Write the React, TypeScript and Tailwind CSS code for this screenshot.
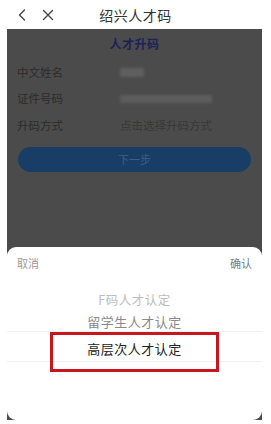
import React from "react";

export default function App() {
  const font = { fontFamily: '"Noto Sans CJK SC", "Noto Sans", sans-serif' };
  return (
    <div className="w-[271px] h-[424px] bg-white overflow-hidden" style={font}>
      {/* header */}
      <div className="h-[29px] grid grid-cols-[1fr_auto_1fr] items-center">
        <div className="flex items-center pl-[16px] gap-[14px] text-[#333]">
          <svg width="12" height="14" viewBox="0 0 12 14" fill="none">
            <path d="M8.5 2 L3.5 7 L8.5 12" stroke="#444" strokeWidth="1.4" strokeLinecap="round" strokeLinejoin="round" />
          </svg>
          <svg width="12" height="12" viewBox="0 0 12 12" fill="none">
            <path d="M1.5 1.5 L10.5 10.5 M10.5 1.5 L1.5 10.5" stroke="#444" strokeWidth="1.4" strokeLinecap="round" />
          </svg>
        </div>
        <div className="text-[14px] leading-none text-[#333] tracking-[0.5px]">绍兴人才码</div>
        <div />
      </div>
      {/* screen */}
      <div className="ml-[7px] w-[255px] h-[391px] bg-[#4b4b4b] flex flex-col">
        <div className="h-[218px] flex flex-col">
          <div className="h-[30px] flex items-center justify-center text-[12px] font-bold text-[#1d2158] tracking-[0.5px]">
            人才升码
          </div>
          <div className="flex flex-col px-[10px] text-[11.5px] text-[#2b2b2b]">
            <div className="h-[27px] flex items-center">
              <span className="w-[103px]">中文姓名</span>
              <span className="w-[24px] h-[9px] bg-[#5f5f5f] blur-[1.5px]" />
            </div>
            <div className="h-[26px] flex items-center">
              <span className="w-[103px]">证件号码</span>
              <span className="w-[92px] h-[8px] bg-[#5d5d5d] blur-[1.5px]" />
            </div>
            <div className="h-[27px] flex items-center">
              <span className="w-[103px]">升码方式</span>
              <span className="text-[#383838]">点击选择升码方式</span>
            </div>
          </div>
          <div className="mt-[8px] mx-[11px] h-[25px] rounded-full bg-[#183e68] flex items-center justify-center text-[11px] text-[#3d5f86]">
            下一步
          </div>
        </div>
        {/* sheet */}
        <div className="flex-1 bg-white rounded-[9px] flex flex-col">
          <div className="h-[24px] flex justify-between items-end px-[10px] text-[11px] leading-[16px] text-[#9a9a9a]">
            <span>取消</span>
            <span className="text-[#6f7e8e]">确认</span>
          </div>
          <div className="mt-[17px] flex flex-col items-center">
            <div className="h-[24px] flex items-center text-[12.5px] text-[#bdbdbd] tracking-[0.5px]">F码人才认定</div>
            <div className="w-full border-b border-[#f0f0f0] h-[20px] flex items-end justify-center text-[13px] leading-[18px] text-[#8a8a8a] tracking-[0.5px]">
              留学生人才认定
            </div>
            <div className="relative w-full border-b border-[#f0f0f0] h-[30px] pt-[4px] flex items-center justify-center text-[13px] text-[#222] tracking-[0.5px]">
              高层次人才认定
              <div className="absolute left-[43px] top-0 w-[169px] h-[40px] border-[3px] border-[#c8161d]" />
            </div>
          </div>
        </div>
      </div>
    </div>
  );
}
